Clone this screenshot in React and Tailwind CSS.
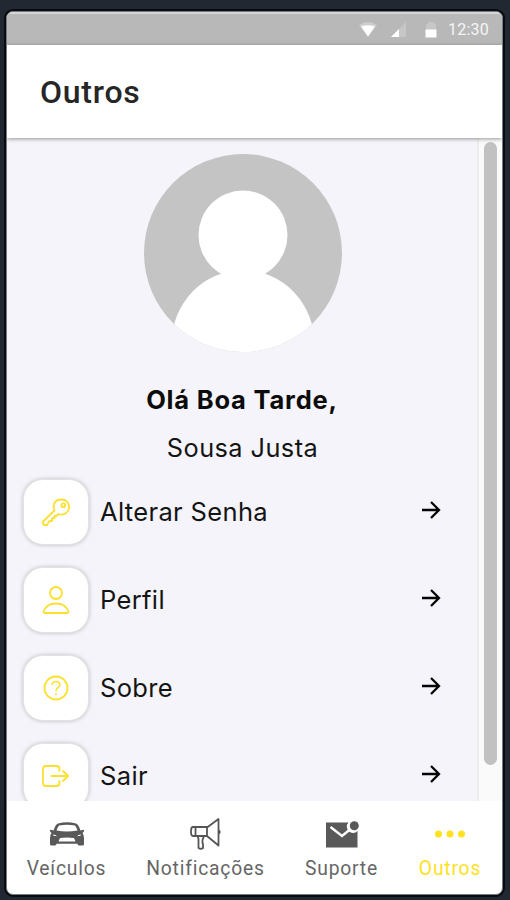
import React from 'react';

const menuItems = [
  { label: 'Alterar Senha', Icon: KeyIcon },
  { label: 'Perfil', Icon: PersonIcon },
  { label: 'Sobre', Icon: HelpIcon },
  { label: 'Sair', Icon: ExitIcon },
];

function IconBase({ children }) {
  return (
    <svg width="30" height="30" viewBox="0 0 30 30" fill="none" stroke="currentColor" strokeWidth="1.8" strokeLinecap="round" strokeLinejoin="round">
      {children}
    </svg>
  );
}

function KeyIcon() {
  return (
    <IconBase>
      <path d="M13.500 13.500C11 7 14.500 2.500 20.500 2.500C25 2.500 28 5.500 28 10C28 15.500 23 19 17.500 17L15.500 19H13.500V21L11 21.500V24H8.500L6 28H3.500Q2 28 2 26V24.500Z" />
      <circle cx="22.300" cy="8.300" r="1.900" />
    </IconBase>
  );
}

function PersonIcon() {
  return (
    <IconBase>
      <circle cx="15" cy="8" r="6" />
      <path d="M3.500 28H26.500Q27.500 28 27.500 26.500C25.500 21 21 18.500 15 18.500S4.500 21 2.500 26.500Q2.500 28 3.500 28Z" />
    </IconBase>
  );
}

function HelpIcon() {
  return (
    <IconBase>
      <circle cx="15" cy="15" r="11.500" />
      <path d="M11 11.500Q11.500 8.500 15 8.500T19 11.800C19 14.500 15 14.500 15 18" strokeWidth="1.500" />
      <circle cx="15" cy="21.200" r="1" fill="currentColor" stroke="none" />
    </IconBase>
  );
}

function ExitIcon() {
  return (
    <IconBase>
      <path d="M18.500 10V8Q18.500 5 15.500 5H5Q2 5 2 8V22Q2 25 5 25H15.500Q18.500 25 18.500 22V20" />
      <path d="M10.500 15H27M22 10 27 15 22 20" />
    </IconBase>
  );
}

function StatusBar() {
  return (
    <div className="flex h-[33px] shrink-0 items-center justify-end border-t-2 border-[#d5d5d5] bg-[#b8b8b8] pr-[13px] text-white">
      <svg width="18" height="15" viewBox="0 0 18 15" className="mr-[14px]" fill="currentColor">
        <path d="M0 3Q9-3 18 3L9 15Z" opacity=".3" />
        <path d="M2 4.500Q9 2 16 4.500L9 14.500Z" />
      </svg>
      <svg width="16" height="15" viewBox="0 0 16 15" className="mr-[18px]" fill="currentColor">
        <path d="M0 15 15 0V15Z" opacity=".2" />
        <path d="M0 15 8 7V15Z" />
      </svg>
      <svg width="12" height="16" viewBox="0 0 12 16" className="mr-[11px]" fill="currentColor">
        <path d="M1 2H3V0H9V2H11V8H1Z" opacity=".2" />
        <path d="M.5 7.500H11.500V15.500H.5Z" />
      </svg>
      <span className="text-[16px] leading-none tracking-[0.25px] text-[#f5f5f5]">12:30</span>
    </div>
  );
}

function Avatar() {
  return (
    <svg width="198" height="198" viewBox="0 0 198 198" className="ml-[2px] shrink-0">
      <defs>
        <clipPath id="avatar">
          <circle cx="99" cy="99" r="99" />
        </clipPath>
      </defs>
      <g clipPath="url(#avatar)">
        <rect width="198" height="198" fill="#c4c4c4" />
        <circle cx="99" cy="81" r="44.5" fill="#fff" />
        <ellipse cx="99" cy="190" rx="71.500" ry="74" fill="#fff" />
      </g>
    </svg>
  );
}

function MenuItem({ label, Icon }) {
  return (
    <li className="flex h-[66px] shrink-0 items-center">
      <span className="flex size-[66px] items-center justify-center rounded-[20px] border border-[#e2e2e4] bg-white text-[#fbe02e] shadow-[0_0_4px_rgba(0,0,0,0.22)]">
        <Icon />
      </span>
      <span className="ml-[11px] flex-1 text-[25.5px] leading-none tracking-[0.35px]">{label}</span>
      <svg width="20" height="20" viewBox="0 0 20 20" className="mr-[36px] mb-[4px]" fill="none" stroke="#050505" strokeWidth="2.3">
        <path d="M1 10H18M10 2 18 10 10 18" />
      </svg>
    </li>
  );
}

function CarIcon() {
  return (
    <svg width="36" height="24" viewBox="0 0 36 24" fill="#595959">
      <path
        fillRule="evenodd"
        d="M9 1.500Q18-.8 27 1.500Q29 2 30.500 6L31.500 8.500 34 7.800Q36 8 34.500 10L33.500 11Q35 13 35 16V22Q35 23.500 33.500 23.500H30Q28.500 23.500 28.500 21.800H7.500Q7.500 23.500 6 23.500H2.500Q1 23.500 1 22V16Q1 13 2.500 11L1.500 10Q0 8 2 7.800L4.500 8.500 5.500 6Q7 2 9 1.500ZM10 3.500Q8.500 5.500 7.500 8.500Q18 10.500 28.500 8.500Q27.500 5.500 26 3.500Q18 1.800 10 3.500ZM4 12.500 4.500 13.800 8 14.300Q7 12.800 4 12.500ZM32 12.500Q29 12.800 28 14.300L31.500 13.800ZM11 16 9.500 19.500H26.500L25 16Q18 15 11 16Z"
      />
    </svg>
  );
}

function MegaphoneIcon() {
  return (
    <svg width="32" height="32" viewBox="0 0 32 32" fill="none" stroke="#555" strokeWidth="1.8" strokeLinejoin="round">
      <path d="M3 9H17V18H3Q1 18 1 13.500T3 9ZM5.500 9V18M17 9.500 28.500 1V27.500L17 18M7.500 18 8.500 21V30Q11 31.500 13 30V26L12.500 25V22L14 18" />
      <path d="M29 11.500Q32.500 14 29 16.500Z" fill="#555" stroke="none" />
    </svg>
  );
}

function MailIcon() {
  return (
    <svg width="34" height="27" viewBox="0 0 34 27">
      <path d="M1 1.500H23.500A6 6 0 0 0 32.500 10V26.500H1Z" fill="#595959" />
      <path d="M5.500 6 17 15 25 8.500" fill="none" stroke="#fff" strokeWidth="2.400" />
      <circle cx="29.300" cy="4.700" r="4.500" fill="#595959" />
    </svg>
  );
}

function Tab({ label, active, className, children }) {
  return (
    <div className={`flex flex-col items-center ${className} ${active ? 'text-[#fde21d]' : 'text-[#666]'}`}>
      <div className="flex h-[34px] items-center justify-center">{children}</div>
      <span className="mt-[6px] whitespace-nowrap text-[19.3px] leading-[24px] tracking-[0.8px]">{label}</span>
    </div>
  );
}

export default function App() {
  return (
    <div className="h-[900px] w-[510px] bg-[#222832] pt-[11px] pl-[6px] font-['Roboto',sans-serif] text-[#141414]">
      <div className="flex h-[884px] w-[497px] flex-col overflow-hidden rounded-[7px] border border-[#777b80] bg-white shadow-[0_0_0_2px_#080b10]">
        <StatusBar />

        <header className="z-10 flex h-[93px] shrink-0 items-center bg-white pt-px pl-[33px] shadow-[0_1px_4px_rgba(0,0,0,0.4)]">
          <h1 className="text-[32px] font-medium leading-none tracking-[0.75px] text-[#262626]">Outros</h1>
        </header>

        <main className="flex h-[663px] shrink-0 overflow-hidden font-['Inter',sans-serif]">
          <section className="flex w-[470px] shrink-0 flex-col items-center bg-[#f5f4fa] pt-[16px]">
            <Avatar />
            <p className="mt-[32px] text-[25.5px] leading-[32px] font-bold tracking-[0.8px] text-[#0c0c0c]">Olá Boa Tarde,</p>
            <p className="mt-[16px] ml-px text-[25.3px] leading-[32px] tracking-[0.45px]">Sousa Justa</p>
            <ul className="mt-[14.5px] flex w-full flex-col gap-[22px] pl-[16px]">
              {menuItems.map((item) => (
                <MenuItem key={item.label} {...item} />
              ))}
            </ul>
          </section>
          <div className="flex flex-1 justify-center border-l-2 border-[#ececef] bg-[#fafafa] pt-[4px]">
            <div className="h-[623px] w-[13px] rounded-full bg-[#c1c1c1]" />
          </div>
        </main>

        <nav className="flex flex-1 pt-[16px]">
          <Tab label="Veículos" className="w-[119px]">
            <CarIcon />
          </Tab>
          <Tab label="Notificações" className="w-[159px]">
            <MegaphoneIcon />
          </Tab>
          <Tab label="Suporte" className="w-[113px]">
            <MailIcon />
          </Tab>
          <Tab label="Outros" className="w-[104px]" active>
            <svg width="30" height="8" viewBox="0 0 30 8" fill="currentColor">
              <circle cx="3.500" cy="4" r="3.500" />
              <circle cx="15" cy="4" r="3.500" />
              <circle cx="26.500" cy="4" r="3.500" />
            </svg>
          </Tab>
        </nav>
      </div>
    </div>
  );
}
